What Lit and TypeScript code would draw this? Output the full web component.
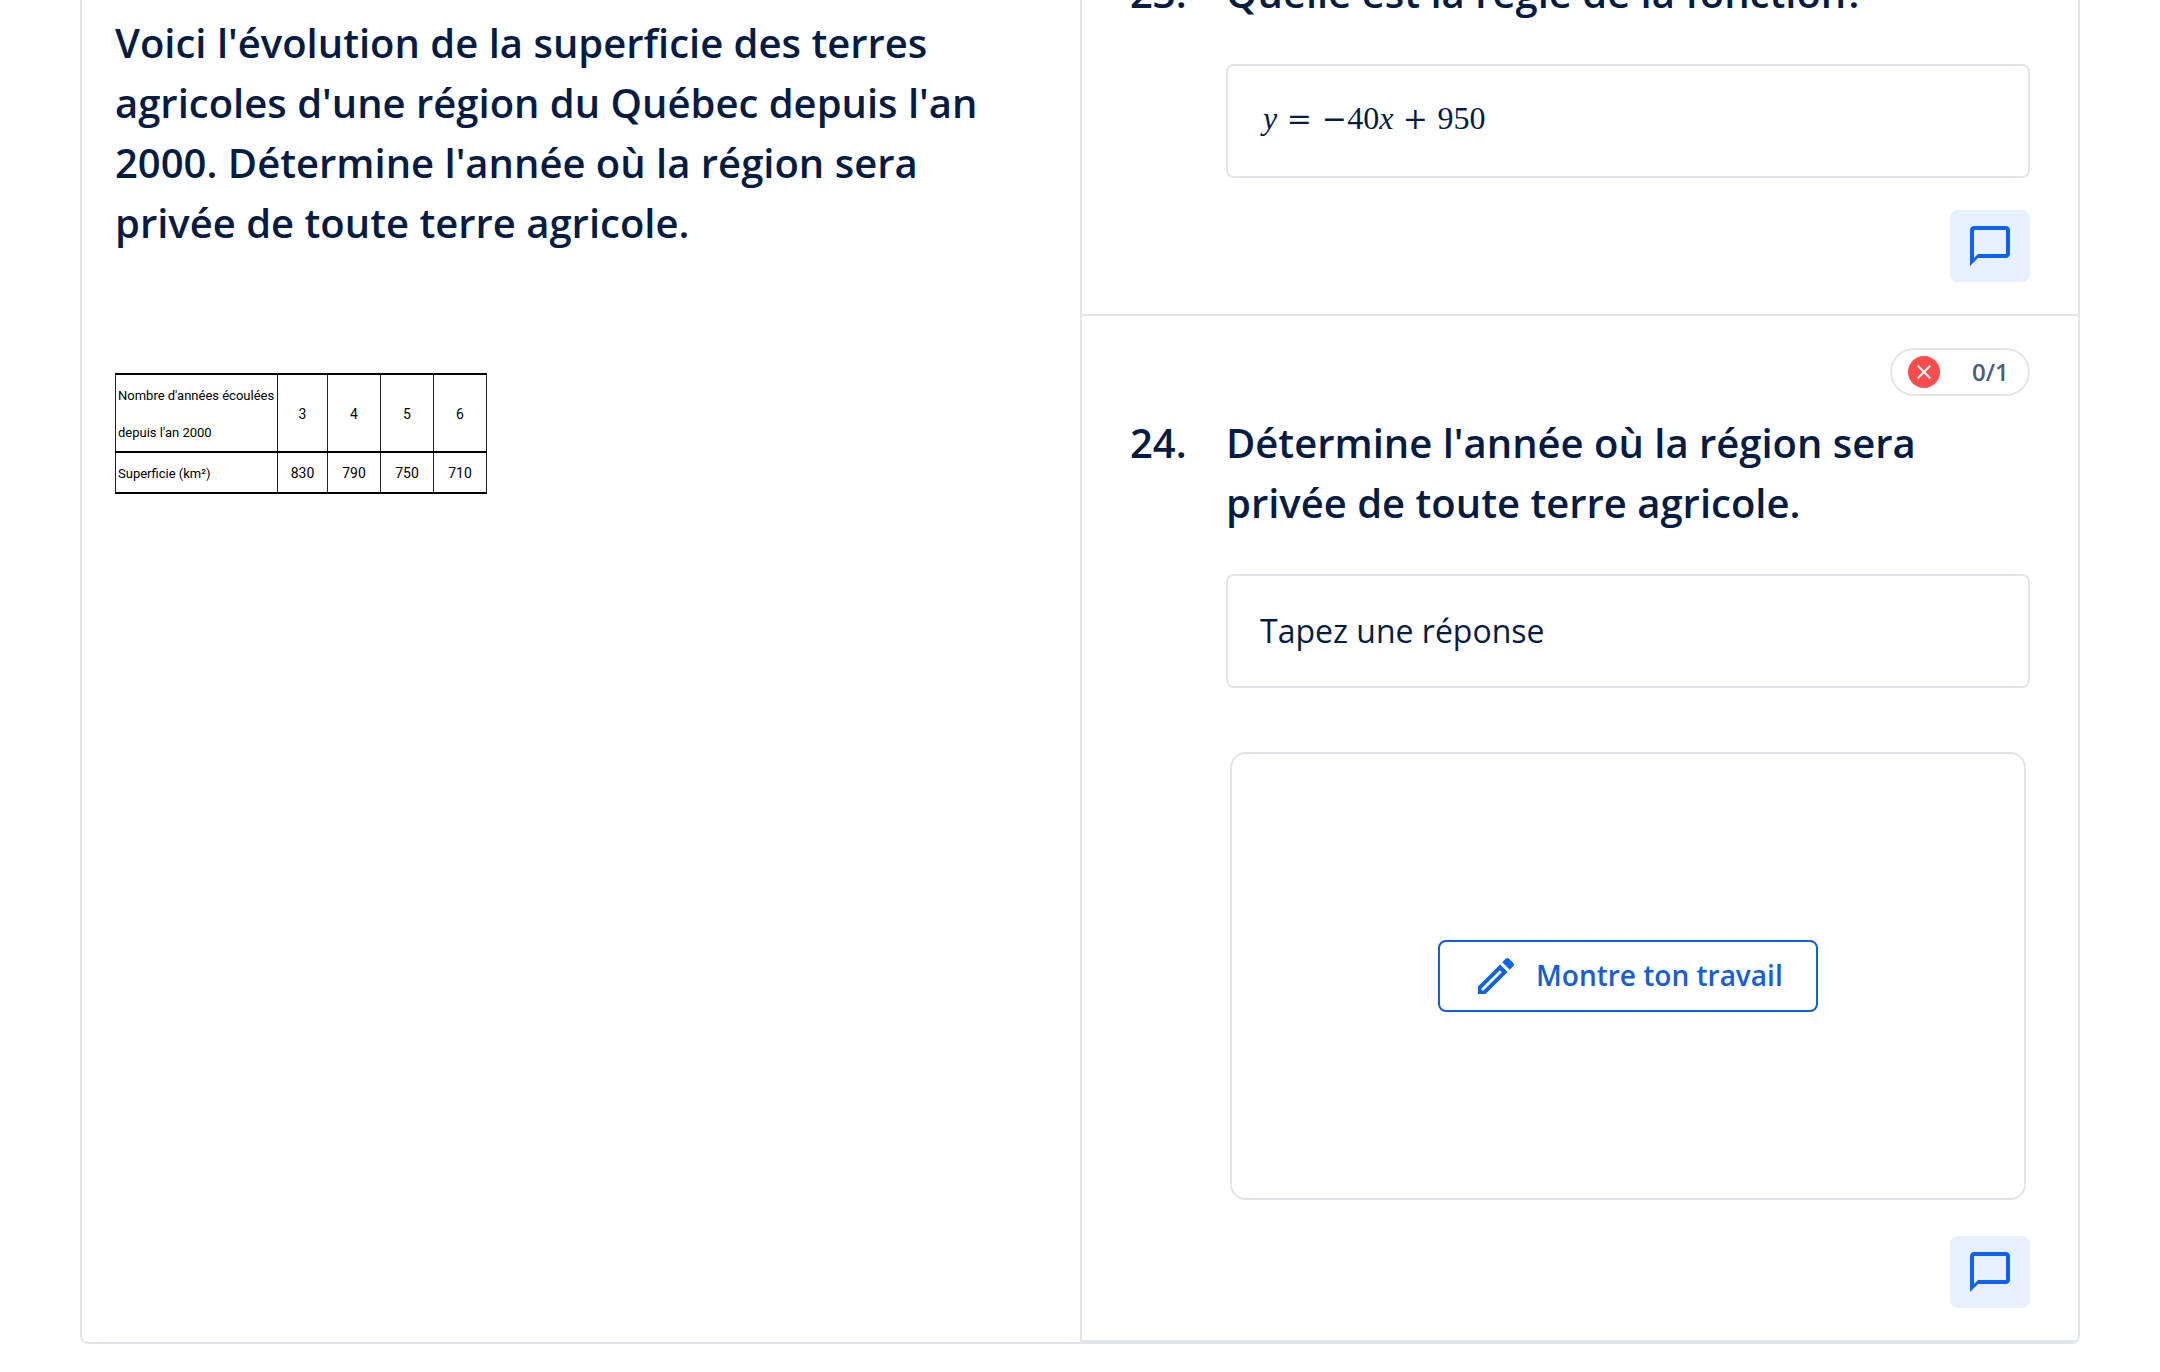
import { LitElement, html, css, svg } from "lit";
import { customElement, property } from "lit/decorators.js";

@customElement("comment-button")
class CommentButton extends LitElement {
  static styles = css`
    :host {
      display: flex;
      justify-content: flex-end;
    }
    .comment {
      display: grid;
      place-items: center;
      width: 80px;
      height: 72px;
      padding: 0;
      border: 0;
      border-radius: 8px;
      background: #e6f0ff;
      color: #0c62f2;
      cursor: pointer;
    }
    .icon {
      width: 48px;
      height: 48px;
      fill: currentColor;
    }
  `;

  render() {
    return html`
      <button class="comment" type="button" aria-label="Commentaire">
        <svg class="icon" viewBox="0 0 24 24" aria-hidden="true">
          <path d="M20 2H4c-1.1 0-2 .9-2 2v18l4-4h14c1.1 0 2-.9 2-2V4c0-1.1-.9-2-2-2zm0 14H6l-2 2V4h16v12z" />
        </svg>
      </button>
    `;
  }
}

@customElement("score-pill")
class ScorePill extends LitElement {
  @property() score = "";

  static styles = css`
    :host {
      display: flex;
      justify-content: flex-end;
    }
    .pill {
      box-sizing: border-box;
      display: flex;
      align-items: center;
      gap: 32px;
      min-width: 140px;
      height: 48px;
      padding: 0 16px;
      border: 2px solid #e2e5ea;
      border-radius: 24px;
      color: #4c5d7a;
      font-size: 24px;
      font-weight: 600;
    }
    .mark {
      width: 32px;
      height: 32px;
    }
    .score {
      padding-bottom: 2px;
    }
  `;

  render() {
    return html`
      <div class="pill">
        <svg class="mark" viewBox="0 0 32 32" aria-hidden="true">
          ${svg`<circle cx="16" cy="16" r="16" fill="#ff4b4b" />
          <path d="M9.8 9.8l12.4 12.4M22.2 9.8L9.8 22.2" stroke="#fff" stroke-width="2" fill="none" />`}
        </svg>
        <span class="score">${this.score}</span>
      </div>
    `;
  }
}

@customElement("app-root")
class AppRoot extends LitElement {
  private years = [3, 4, 5, 6];
  private areas = [830, 790, 750, 710];

  static styles = css`
    :host {
      display: block;
      padding: 0 80px 28px;
      background: #fff;
      color: #051c42;
      font-family: "Open Sans", "Noto Sans", sans-serif;
    }
    .card {
      display: grid;
      grid-template-columns: 1fr 1fr;
      overflow: hidden;
      border: 2px solid #e2e5ea;
      border-top: 0;
      border-radius: 0 0 8px 8px;
    }
    .prompt {
      padding: 13px 80px 32px 33px;
    }
    .title {
      margin: 0;
      font-size: 40px;
      line-height: 60px;
      font-weight: 600;
    }
    .data {
      width: 372px;
      margin-top: 120px;
      table-layout: fixed;
      border-collapse: collapse;
      color: #000;
      font-family: Roboto, "Open Sans", sans-serif;
      font-size: 13px;
      line-height: 37px;
    }
    .data th,
    .data td {
      box-sizing: border-box;
      padding: 2px 0 0;
      border: 1px solid #222;
      border-top: 2px solid #000;
      border-bottom: 2px solid #000;
      font-weight: 400;
      text-align: center;
    }
    .data td {
      font-size: 14px;
    }
    .data td:nth-child(2) {
      width: 50px;
    }
    .data th[scope="row"] {
      width: 162px;
      padding-left: 2px;
      text-align: left;
      white-space: nowrap;
    }
    .questions {
      min-width: 0;
      border-left: 2px solid #e2e5ea;
    }
    .question {
      padding: 32px 48px;
      border-bottom: 2px solid #e2e5ea;
    }
    .question.scrolled {
      margin-top: -37px;
      padding-top: 0;
    }
    .heading {
      display: grid;
      grid-template-columns: 96px 1fr;
    }
    .heading.scored {
      margin-top: 17px;
    }
    .body {
      display: flex;
      flex-direction: column;
      margin: 41px 0 32px 96px;
    }
    .field {
      box-sizing: border-box;
      display: flex;
      align-items: center;
      width: 100%;
      height: 114px;
      padding: 0 32px 2px;
      border: 2px solid #e2e5ea;
      border-radius: 8px;
      background: #fff;
      color: inherit;
      font: inherit;
      font-size: 32px;
    }
    .field::placeholder {
      color: inherit;
      opacity: 1;
    }
    .formula {
      display: flex;
      align-items: baseline;
      padding: 0 0 3px 3px;
      font-family: "Liberation Serif", serif;
      font-size: 32px;
      line-height: 40px;
    }
    .relation,
    .operator,
    .sign {
      width: 44px;
      font-family: "DejaVu Serif", serif;
      font-size: 30px;
      text-align: center;
    }
    .sign {
      width: 26px;
    }
    .work {
      display: grid;
      place-items: center;
      height: 444px;
      margin: 64px 4px 4px;
      border: 2px solid #e2e5ea;
      border-radius: 16px;
    }
    .show {
      display: flex;
      align-items: center;
      gap: 16px;
      min-width: 380px;
      height: 72px;
      padding: 0 32px;
      border: 2px solid #145ddb;
      border-radius: 8px;
      background: #fff;
      color: #145ddb;
      font: inherit;
      font-size: 28px;
      font-weight: 600;
      cursor: pointer;
    }
    .caption {
      padding-bottom: 2px;
    }
    .pencil {
      width: 48px;
      height: 48px;
      fill: #0c62e8;
    }
    .groove {
      stroke: #fff;
      stroke-width: 1.4;
    }
  `;

  render() {
    return html`
      <main class="card">
        <section class="prompt">
          <h1 class="title">
            Voici l'évolution de la superficie des terres agricoles d'une région du Québec depuis l'an 2000.
            Détermine l'année où la région sera privée de toute terre agricole.
          </h1>
          <table class="data">
            <tr>
              <th scope="row">Nombre d'années écoulées<br />depuis l'an 2000</th>
              ${this.years.map((year) => html`<td>${year}</td>`)}
            </tr>
            <tr>
              <th scope="row">Superficie (km²)</th>
              ${this.areas.map((area) => html`<td>${area}</td>`)}
            </tr>
          </table>
        </section>
        <div class="questions">
          <section class="question scrolled">
            <h2 class="title heading"><span>23.</span><span>Quelle est la règle de la fonction?</span></h2>
            <div class="body">
              <div class="field">
                <div class="formula">
                  <i>y</i><span class="relation">=</span><span class="sign">−</span><span>40</span><i>x</i
                  ><span class="operator">+</span><span>950</span>
                </div>
              </div>
            </div>
            <comment-button></comment-button>
          </section>
          <section class="question">
            <score-pill score="0/1"></score-pill>
            <h2 class="title heading scored">
              <span>24.</span>
              <label for="answer">Détermine l'année où la région sera privée de toute terre agricole.</label>
            </h2>
            <div class="body">
              <input class="field" id="answer" type="text" placeholder="Tapez une réponse" />
              <div class="work">
                <button class="show" type="button">
                  <svg class="pencil" viewBox="0 0 24 24" aria-hidden="true">
                    <path
                      d="M3 17.25V21h3.75L17.81 9.94l-3.75-3.75L3 17.25zM20.71 5.63l-2.34-2.34a1 1 0 0 0-1.41 0l-1.83 1.83 3.75 3.75 1.83-1.83a1 1 0 0 0 0-1.41z"
                    />
                    <path class="groove" d="M5 19l9.4-9.4" />
                  </svg>
                  <span class="caption">Montre ton travail</span>
                </button>
              </div>
            </div>
            <comment-button></comment-button>
          </section>
        </div>
      </main>
    `;
  }
}
